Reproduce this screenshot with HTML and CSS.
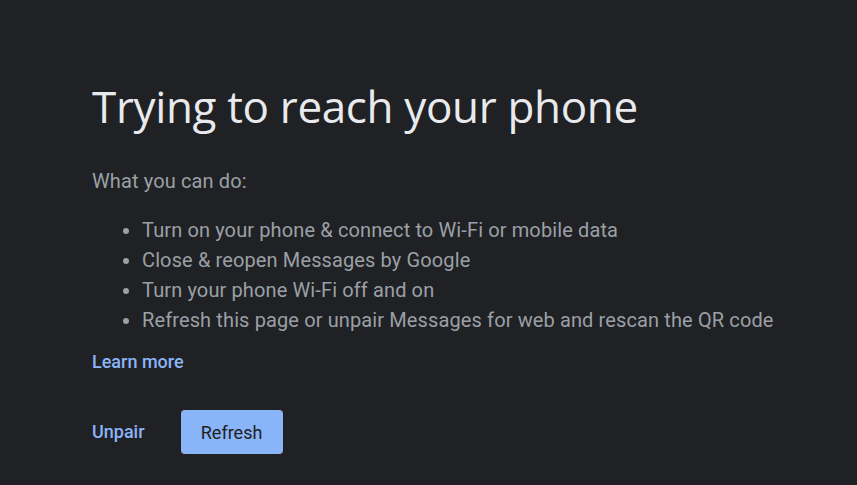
FILE: index.html
```html
<!DOCTYPE html>
<html lang="en">
<head>
<meta charset="utf-8">
<title>Trying to reach your phone</title>
<link rel="stylesheet" href="styles.css">
</head>
<body>
<main class="page">
  <h1 class="title">Trying to reach your phone</h1>
  <p class="lead">What you can do:</p>
  <ul class="steps">
    <li>Turn on your phone &amp; connect to Wi-Fi or mobile data</li>
    <li>Close &amp; reopen Messages by Google</li>
    <li>Turn your phone Wi-Fi off and on</li>
    <li>Refresh this page or unpair Messages for web and rescan the QR code</li>
  </ul>
  <a class="link learn" href="#">Learn more</a>
  <div class="actions">
    <a class="link" href="#">Unpair</a>
    <button class="btn" type="button">Refresh</button>
  </div>
</main>
</body>
</html>
```

FILE: styles.css
```css
html, body {
  margin: 0;
  padding: 0;
  background: #202124;
  height: 100%;
}
body {
  font-family: Roboto, "Liberation Sans", sans-serif;
  color: #9aa0a6;
}
.page {
  padding: 80px 0 0 92px;
  display: flex;
  flex-direction: column;
  align-items: flex-start;
}
.title {
  margin: 0;
  font-family: "Open Sans", Roboto, sans-serif;
  font-weight: 400;
  font-size: 44px;
  line-height: 52px;
  color: #e8eaed;
  letter-spacing: -0.35px;
}
.lead {
  margin: 37px 0 0;
  font-size: 20px;
  line-height: 24px;
  letter-spacing: 0.12px;
}
.steps {
  margin: 22px 0 0;
  padding: 0 0 0 50px;
  font-size: 20px;
  line-height: 30px;
  letter-spacing: 0.12px;
}
.link {
  color: #8ab4f8;
  text-decoration: none;
  font-weight: 500;
  font-size: 18px;
  line-height: 24px;
}
.learn {
  margin-top: 15px;
}
.actions {
  margin-top: 36px;
  display: flex;
  align-items: center;
  gap: 36px;
}
.btn {
  font-family: Roboto, sans-serif;
  font-size: 18px;
  font-weight: 400;
  color: #202124;
  background: #8ab4f8;
  border: none;
  border-radius: 4px;
  width: 102px;
  height: 44px;
  padding: 0;
}
```
